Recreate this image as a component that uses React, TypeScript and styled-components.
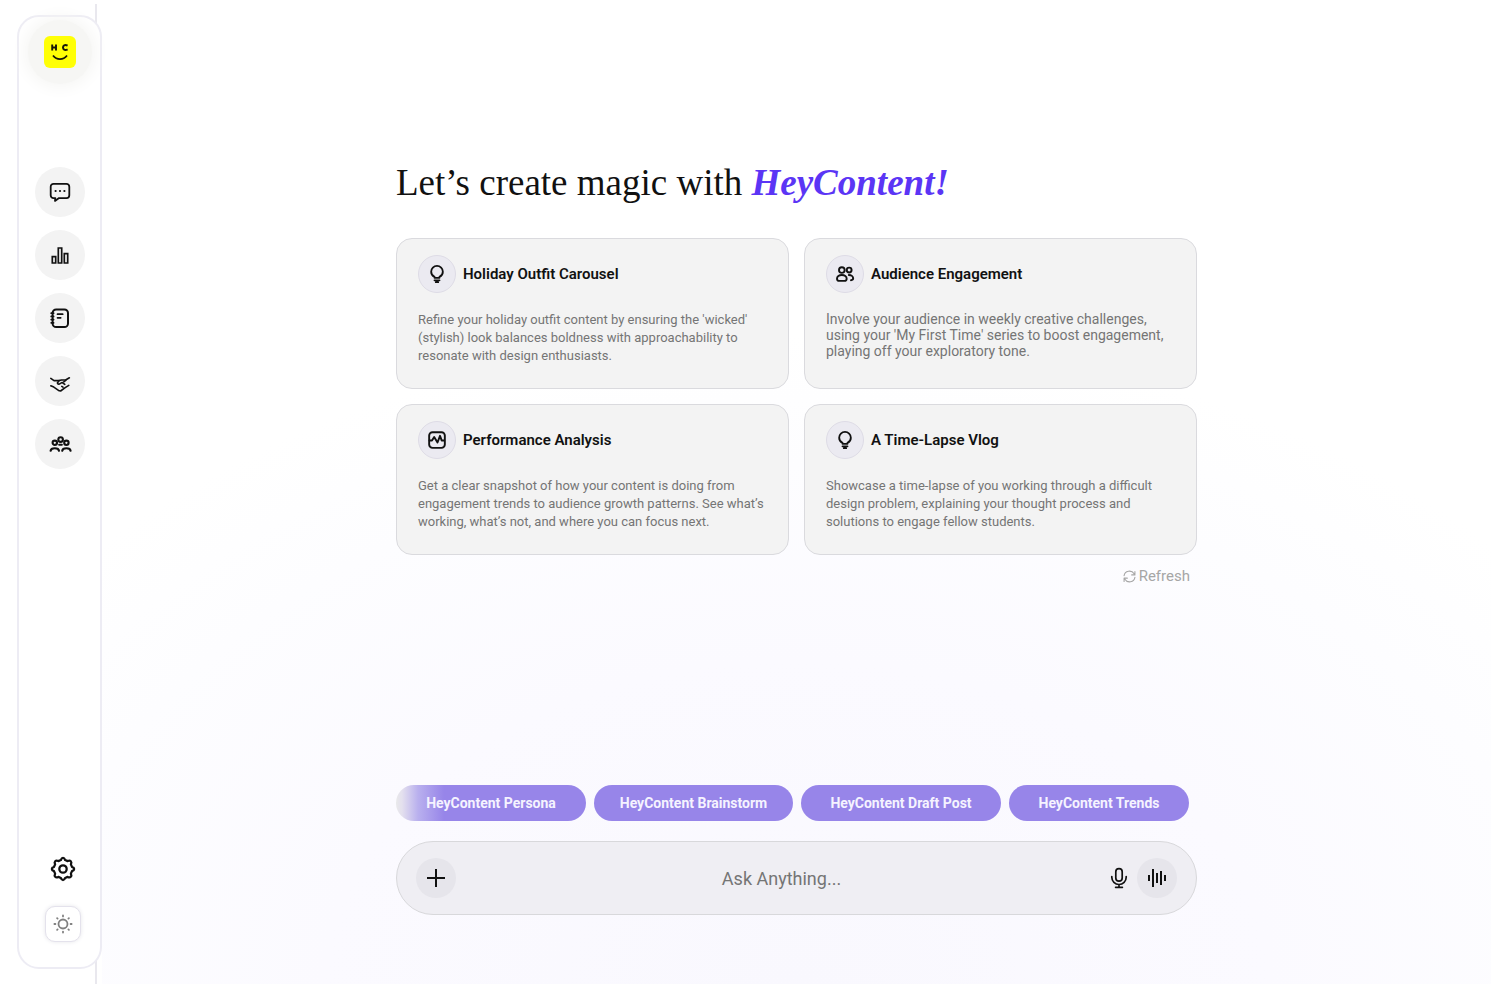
import React from "react";
import styled, { createGlobalStyle } from "styled-components";

const GlobalStyle = createGlobalStyle`
  * { box-sizing: border-box; }
  body {
    margin: 0;
    background: #ffffff;
    color: #111111;
    font-family: Roboto, "Liberation Sans", sans-serif;
  }
  button { font: inherit; color: inherit; border: 0; padding: 0; cursor: pointer; }
`;

const Page = styled.div`
  display: flex;
  min-height: 100vh;
`;

const Sidebar = styled.aside`
  position: relative;
  display: flex;
  flex: 0 0 102px;
  padding: 15px 0 15px 17px;

  &::before {
    content: "";
    position: absolute;
    top: 4px;
    bottom: 0;
    right: 5px;
    width: 2px;
    background: #e9e8ee;
  }
`;

const Rail = styled.div`
  position: relative;
  display: flex;
  flex: 1;
  flex-direction: column;
  align-items: center;
  padding: 19px 0 25px;
  border: 2px solid #edecf4;
  border-radius: 22px;
  background: #ffffff;
`;

const Logo = styled.a`
  position: relative;
  display: block;
  width: 32px;
  height: 32px;

  &::before {
    content: "";
    position: absolute;
    inset: -16px;
    border-radius: 50%;
    background: #f6f6f4;
    box-shadow: 0 0 16px 4px #f6f6f4;
  }
`;

const LogoSvg = styled.svg`
  position: relative;
  display: block;
`;

const RailNav = styled.nav`
  display: flex;
  flex-direction: column;
  gap: 13px;
  margin-top: 99px;
`;

const RailLink = styled.a`
  display: grid;
  place-items: center;
  width: 50px;
  height: 50px;
  border-radius: 50%;
  background: #f3f3f3;
  color: #111111;
`;

const RailFooter = styled.div`
  display: flex;
  flex-direction: column;
  align-items: center;
  gap: 24px;
  margin-top: auto;
  padding-left: 6px;
`;

const PlainButton = styled.button`
  display: grid;
  place-items: center;
  background: transparent;
`;

const ThemeButton = styled(PlainButton)`
  width: 36px;
  height: 36px;
  border: 1px solid #e4e2ec;
  border-radius: 10px;
  background: #ffffff;
  box-shadow: 0 0 4px #e6e6ea;
  color: #808080;
`;

const Main = styled.main`
  display: flex;
  flex: 1;
  flex-direction: column;
  align-items: center;
  min-width: 0;
  padding: 160px 24px 69px;
  background: radial-gradient(ellipse 68% 66% at 50% 100%, #f9f8fe 0%, #fbfaff 50%, #fdfdff 80%, #ffffff 100%);
`;

const Column = styled.div`
  display: flex;
  flex: 1;
  flex-direction: column;
  width: 100%;
  max-width: 801px;
`;

const Title = styled.h1`
  margin: 0 0 32px;
  font-family: "Liberation Serif", serif;
  font-size: 37px;
  font-weight: 400;
  line-height: 46px;
`;

const Brand = styled.em`
  color: #5b35f5;
  font-weight: 700;
`;

const CardGrid = styled.div`
  display: grid;
  grid-template-columns: repeat(2, minmax(0, 1fr));
  gap: 15px;
`;

const Card = styled.article`
  display: flex;
  flex-direction: column;
  gap: 18px;
  min-height: 151px;
  padding: 16px 20px 20px 21px;
  border: 1px solid #dadade;
  border-radius: 16px;
  background: #f3f3f3;
`;

const CardHead = styled.header`
  display: flex;
  align-items: center;
  gap: 7px;
`;

const CardIcon = styled.span`
  display: grid;
  place-items: center;
  width: 38px;
  height: 38px;
  border: 1px solid #dedce6;
  border-radius: 50%;
  background: #ebeaf1;
`;

const CardTitle = styled.h2`
  margin: 0;
  font-size: 15px;
  font-weight: 600;
  line-height: 20px;
`;

const CardText = styled.p<{ $large?: boolean }>`
  margin: 0;
  color: #757575;
  font-size: ${(p) => (p.$large ? 14 : 13)}px;
  line-height: ${(p) => (p.$large ? 16 : 18)}px;
`;

const RefreshButton = styled.button`
  display: flex;
  align-items: center;
  align-self: flex-end;
  gap: 3px;
  margin: 11px 7px 0 0;
  background: transparent;
  color: #a6a6a6;
  font-size: 15px;
  line-height: 20px;
`;

const Chips = styled.div`
  display: flex;
  gap: 8px;
  margin-top: auto;
  padding-top: 32px;
`;

const Chip = styled.button<{ $width: number; $faded?: boolean }>`
  flex: 0 1 ${(p) => p.$width}px;
  height: 36px;
  border-radius: 18px;
  background: ${(p) =>
    p.$faded ? "linear-gradient(90deg, #e9e9ea 0, #e4e0ee 6px, #b9b0ee 22px, #9785e9 48px)" : "#9785e9"};
  color: #f5f3ff;
  font-size: 14px;
  font-weight: 700;
  white-space: nowrap;
`;

const Prompt = styled.form`
  display: flex;
  align-items: center;
  height: 74px;
  margin-top: 20px;
  padding: 0 19px;
  border: 1px solid #d8d8db;
  border-radius: 37px;
  background: #efeef3;
`;

const RoundButton = styled(PlainButton)`
  flex: none;
  width: 40px;
  height: 40px;
  border-radius: 50%;
  background: #e6e5eb;
`;

const PromptInput = styled.input`
  flex: 1;
  min-width: 0;
  height: 40px;
  border: 0;
  background: transparent;
  color: #111111;
  font: 18px/24px Roboto, "Liberation Sans", sans-serif;
  text-align: center;
  outline: 0;

  &::placeholder { color: #757575; opacity: 1; }
`;

const MicButton = styled(PlainButton)`
  width: 24px;
  height: 40px;
  margin-right: 6px;
`;

type IconProps = { size: number; stroke?: number; children: React.ReactNode };

const Icon = ({ size, stroke = 1.5, children }: IconProps) => (
  <svg
    width={size}
    height={size}
    viewBox="0 0 24 24"
    fill="none"
    stroke="currentColor"
    strokeWidth={stroke}
    strokeLinecap="round"
    strokeLinejoin="round"
    aria-hidden="true"
  >
    {children}
  </svg>
);

const LogoMark = () => (
  <LogoSvg width="32" height="32" viewBox="0 0 32 32" fill="none" aria-hidden="true">
    <rect width="32" height="32" rx="6" fill="#ffff05" />
    <g stroke="#16160a" strokeWidth="2">
      <path d="M8.2 8.5v6M12 8.5v6M8.2 11.5H12" strokeWidth="1.9" />
      <path d="M23.6 9.6c-3-1.5-4.6 0-4.6 1.9s1.6 3.4 4.6 1.9" />
      <path d="M9 19.500c3.8 4.8 10.2 4.8 14 0" strokeWidth="1.8" />
    </g>
  </LogoSvg>
);

const ChatIcon = () => (
  <Icon size={24} stroke={1.8}>
    <path d="M5.5 3.9h13a2.8 2.8 0 0 1 2.8 2.8v8.6a2.8 2.8 0 0 1-2.8 2.8H11l-4 2.8.3-2.8H5.5a2.8 2.8 0 0 1-2.8-2.8V6.7a2.8 2.8 0 0 1 2.8-2.8z" />
    <path d="M7.6 11h.01M12 11h.01M16.4 11h.01" strokeWidth="2.2" />
  </Icon>
);

const BarsIcon = () => (
  <Icon size={24} stroke={1.7}>
    <path d="M4.3 13.700h3.400v6.300H4.300zM10.300 5h3.400v15h-3.400zM16.300 10.700h3.400v9.300h-3.400z" strokeLinejoin="miter" />
  </Icon>
);

const NotebookIcon = () => (
  <Icon size={24} stroke={2}>
    <rect x="4.6" y="3.4" width="15.4" height="17.6" rx="3.6" />
    <path d="M3.2 7.2h2.4M3.2 10.4h2.4M3.2 13.6h2.4M3.2 16.8h2.400M9.5 8.2h5.2M9.5 11.8h3.2" strokeWidth="1.7" />
  </Icon>
);

const HandshakeIcon = () => (
  <Icon size={24} stroke={1.6}>
    <path d="M2.8 9.400 6 11.600h5l2.400-.6h4.200l3.800-2.200" />
    <path d="M11 11.600 9.400 14c.4 1.400 1.800 1.400 3 .4l1.800-.9 2.600 1.900" />
    <path d="m2.800 16.800 3 1.300 5.400 3.700 1.400.2 4.600-3.400 3.600-2.200" />
    <path d="m13.800 17.400 1.200.8M15.800 12.800l2-1.400" />
  </Icon>
);

const CommunityIcon = () => (
  <Icon size={24} stroke={2.1}>
    <circle cx="12.600" cy="7.600" r="2.300" />
    <circle cx="6.800" cy="10.800" r="2.200" />
    <circle cx="18.400" cy="10.800" r="2.200" />
    <path d="M2.600 18.800c.4-3.400 8-3.400 8.400 0M14.200 18.800c.4-3.400 8-3.400 8.400 0M11.200 12.800h2.600" />
  </Icon>
);

const GearIcon = () => (
  <Icon size={26} stroke={2.1}>
    <path d="M10 3.700Q10.700 1.700 12 1.700T14 3.700L16.300 4.700Q18.200 3.800 19.200 4.800T19.300 7.700L20.300 10Q22.300 10.700 22.300 12T20.300 14L19.300 16.300Q20.200 18.200 19.200 19.200T16.300 19.300L14 20.300Q13.300 22.300 12 22.300T10 20.300L7.700 19.300Q5.800 20.200 4.800 19.200T4.700 16.300L3.700 14Q1.700 13.300 1.700 12T3.700 10L4.700 7.700Q3.800 5.800 4.800 4.800T7.700 4.700Z" />
    <circle cx="12" cy="12" r="3.400" />
  </Icon>
);

const SunIcon = () => (
  <Icon size={24} stroke={1.8}>
    <circle cx="12" cy="12" r="4.500" />
    <path d="M12 3.400v1M12 19.600v1M3.400 12h1M19.600 12h1M6.100 6.100l.5.500M17.400 17.400l.5.500M6.100 17.900l.5-.5M17.400 6.600l.5-.5" />
  </Icon>
);

const BulbIcon = () => (
  <Icon size={20} stroke={2.2}>
    <path d="M9 16.600v-1.200c-2.400-1.200-4-3.200-4-6.200a7 7 0 0 1 14 0c0 3-1.600 5-4 6.200v1.200zM9 19.600h6M10.600 21.800h2.800" />
  </Icon>
);

const PairIcon = () => (
  <Icon size={20} stroke={2.3}>
    <circle cx="8.200" cy="7.200" r="3.400" />
    <circle cx="17" cy="7.200" r="2.900" />
    <path d="M8.200 13.200c-3.400 0-5.800 1.900-5.800 4.400 0 1.700 1.100 2.600 2.700 2.600h6.200c1.600 0 2.700-.9 2.700-2.600 0-2.500-2.400-4.400-5.800-4.400zM16.600 13.200c2.900 0 5.200 1.700 5.200 4 0 1.400-1 2.200-2.600 2.200" />
  </Icon>
);

const PulseIcon = () => (
  <Icon size={20} stroke={2.3}>
    <rect x="2.600" y="2.600" width="18.800" height="18.800" rx="4" />
    <path d="M3 12.500h3l2.600-4 4 6.500 3-8 2 5.500h3" />
  </Icon>
);

const RefreshIcon = () => (
  <Icon size={13} stroke={2}>
    <path d="M2 10.500A10 10 0 0 1 20.500 7L22 9M22 3v6h-6M22 13.500A10 10 0 0 1 3.500 17L2 15M2 21v-6h6" />
  </Icon>
);

const PlusIcon = () => (
  <Icon size={24} stroke={2}>
    <path d="M12 3v18M3 12h18" strokeLinecap="butt" />
  </Icon>
);

const MicIcon = () => (
  <Icon size={24} stroke={1.7}>
    <rect x="8.800" y="2.600" width="6.400" height="12.600" rx="3.200" />
    <path d="M4.800 10.500v.8a7.200 7.200 0 0 0 14.400 0v-.8M12 18.600v2.600M8.600 21.300h6.800" />
  </Icon>
);

const WaveIcon = () => (
  <Icon size={24} stroke={2}>
    <path d="M4 9v6M8 3v18M12 7v10M16 5v14M20 9v6" strokeLinecap="butt" />
  </Icon>
);

const navItems = [
  { label: "Chat", icon: <ChatIcon /> },
  { label: "Analytics", icon: <BarsIcon /> },
  { label: "Notes", icon: <NotebookIcon /> },
  { label: "Partnerships", icon: <HandshakeIcon /> },
  { label: "Community", icon: <CommunityIcon /> },
];

const ideas = [
  {
    title: "Holiday Outfit Carousel",
    icon: <BulbIcon />,
    text: "Refine your holiday outfit content by ensuring the 'wicked' (stylish) look balances boldness with approachability to resonate with design enthusiasts.",
  },
  {
    title: "Audience Engagement",
    icon: <PairIcon />,
    large: true,
    text: "Involve your audience in weekly creative challenges, using your 'My First Time' series to boost engagement, playing off your exploratory tone.",
  },
  {
    title: "Performance Analysis",
    icon: <PulseIcon />,
    text: "Get a clear snapshot of how your content is doing from engagement trends to audience growth patterns. See what’s working, what’s not, and where you can focus next.",
  },
  {
    title: "A Time-Lapse Vlog",
    icon: <BulbIcon />,
    text: "Showcase a time-lapse of you working through a difficult design problem, explaining your thought process and solutions to engage fellow students.",
  },
];

const chips = [
  { label: "HeyContent Persona", width: 190, faded: true },
  { label: "HeyContent Brainstorm", width: 199 },
  { label: "HeyContent Draft Post", width: 200 },
  { label: "HeyContent Trends", width: 180 },
];

export default function App() {
  return (
    <>
      <GlobalStyle />
      <Page>
        <Sidebar>
          <Rail>
            <Logo href="#" aria-label="HeyContent home">
              <LogoMark />
            </Logo>
            <RailNav aria-label="Main">
              {navItems.map((item) => (
                <RailLink key={item.label} href="#" aria-label={item.label}>
                  {item.icon}
                </RailLink>
              ))}
            </RailNav>
            <RailFooter>
              <PlainButton type="button" aria-label="Settings">
                <GearIcon />
              </PlainButton>
              <ThemeButton type="button" aria-label="Switch theme">
                <SunIcon />
              </ThemeButton>
            </RailFooter>
          </Rail>
        </Sidebar>
        <Main>
          <Column>
            <Title>
              Let’s create magic with <Brand>HeyContent!</Brand>
            </Title>
            <CardGrid>
              {ideas.map((idea) => (
                <Card key={idea.title}>
                  <CardHead>
                    <CardIcon>{idea.icon}</CardIcon>
                    <CardTitle>{idea.title}</CardTitle>
                  </CardHead>
                  <CardText $large={idea.large}>{idea.text}</CardText>
                </Card>
              ))}
            </CardGrid>
            <RefreshButton type="button">
              <RefreshIcon />
              Refresh
            </RefreshButton>
            <Chips>
              {chips.map((chip) => (
                <Chip key={chip.label} type="button" $width={chip.width} $faded={chip.faded}>
                  {chip.label}
                </Chip>
              ))}
            </Chips>
            <Prompt onSubmit={(e) => e.preventDefault()}>
              <RoundButton type="button" aria-label="Add attachment">
                <PlusIcon />
              </RoundButton>
              <PromptInput type="text" aria-label="Ask anything" placeholder="Ask Anything..." />
              <MicButton type="button" aria-label="Dictate">
                <MicIcon />
              </MicButton>
              <RoundButton type="button" aria-label="Voice mode">
                <WaveIcon />
              </RoundButton>
            </Prompt>
          </Column>
        </Main>
      </Page>
    </>
  );
}
